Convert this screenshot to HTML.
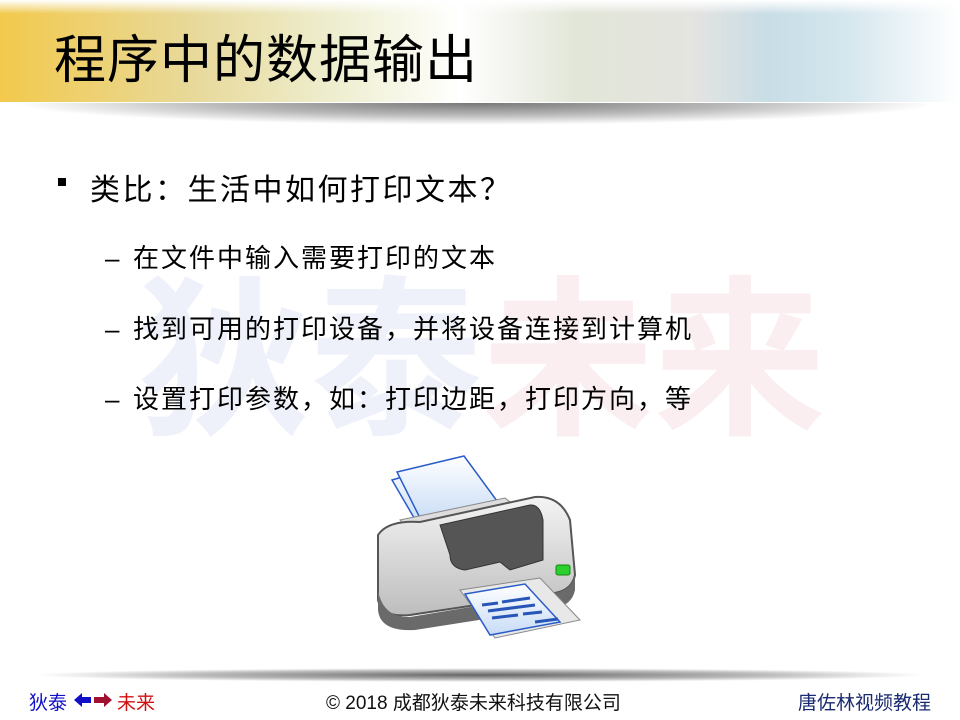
<!DOCTYPE html>
<html><head><meta charset="utf-8"><style>
body{margin:0;width:960px;height:720px;position:relative;overflow:hidden;background:#fff;font-family:"Liberation Sans","Noto Sans CJK SC",sans-serif}
.hdr{position:absolute;left:0;top:0;width:960px;height:102px;background:linear-gradient(90deg,#f2c94c 0%,#e8d99a 20%,#eeeed0 35%,#fff 48%,#e2e6d8 60%,#e4e4e0 72%,#c8dde6 80%,#d4e6ee 88%,#fff 100%)}
.hdr:after{content:"";position:absolute;left:0;right:0;top:0;height:14px;background:linear-gradient(#fff,rgba(255,255,255,0))}
.shadow{position:absolute;left:10px;top:103px;width:930px;height:22px;background:radial-gradient(ellipse at 50% 0%,#777 0%,#bbb 40%,rgba(255,255,255,0) 70%)}
.title{position:absolute;left:54px;top:18px;font-size:52px;color:#000;letter-spacing:1px}
.wm{position:absolute;top:262px;left:138px;font-size:172px;font-weight:bold;line-height:200px}
.b1{position:absolute;left:58px;top:165px;font-size:30px;letter-spacing:2.5px}
.b1 .sq{position:absolute;left:0;top:13px;width:8px;height:8px;background:#000}
.b1 span.t{margin-left:32px}
.sub{position:absolute;left:105px;font-size:26px;letter-spacing:2px}
.sub b{font-weight:normal;display:inline-block;width:28px;letter-spacing:0}
.fshadow{position:absolute;left:30px;top:668px;width:900px;height:14px;background:radial-gradient(ellipse at 50% 50%,#666 0%,#bbb 45%,rgba(255,255,255,0) 70%)}
.ft{position:absolute;top:688px;font-size:19px}
</style></head><body>
<div class="hdr"></div><div class="shadow"></div>
<div class="title">程序中的数据输出</div>
<div class="wm"><span style="color:#eef1fa">狄泰</span><span style="color:#faeef1">未来</span></div>
<div class="b1"><div class="sq"></div><span class="t">类比：生活中如何打印文本？</span></div>
<div class="sub" style="top:238px"><b>–</b>在文件中输入需要打印的文本</div>
<div class="sub" style="top:309px"><b>–</b>找到可用的打印设备，并将设备连接到计算机</div>
<div class="sub" style="top:379px"><b>–</b>设置打印参数，如：打印边距，打印方向，等</div>
<svg style="position:absolute;left:360px;top:450px" width="240" height="200" viewBox="0 0 240 200">
<defs><linearGradient id="bd" x1="0" y1="0" x2="0" y2="1"><stop offset="0" stop-color="#f4f4f4"/><stop offset="1" stop-color="#bdbdbd"/></linearGradient>
<linearGradient id="pp" x1="0" y1="0" x2="0" y2="1"><stop offset="0" stop-color="#fff"/><stop offset="1" stop-color="#c8dcf6"/></linearGradient></defs>
<path d="M32 30 L100 10 L138 58 L60 78 Z" fill="url(#pp)" stroke="#2a5cc8" stroke-width="1.5"/>
<path d="M37 22 L104 6 L140 55 L62 72 Z" fill="url(#pp)" stroke="#2a5cc8" stroke-width="1.5"/>
<path d="M40 70 L145 48 L158 58 L50 82 Z" fill="#ddd" stroke="#888"/>
<path d="M18 85 Q28 70 60 72 L175 47 Q200 45 210 70 L215 125 Q212 140 195 143 L50 165 Q22 168 18 150 Z" fill="url(#bd)" stroke="#555" stroke-width="2"/>
<path d="M80 75 L170 55 Q180 54 183 70 L183 110 L150 120 L140 112 L105 120 Q90 118 90 105 Z" fill="#555" stroke="#333"/>
<path d="M18 140 Q23 168 50 167 L195 143 Q212 140 215 125 L215 140 Q212 155 195 158 L55 180 Q20 182 18 160 Z" fill="#6a6a6a"/>
<rect x="196" y="115" width="14" height="10" rx="2" fill="#2cd02c" stroke="#118811"/>
<path d="M100 140 L180 128 L220 170 L135 188 Z" fill="#e8e8e8" stroke="#888"/>
<path d="M105 144 L165 134 L200 172 L130 185 Z" fill="url(#pp)" stroke="#2a5cc8" stroke-width="1.5"/>
<g stroke="#2756b8" stroke-width="3"><line x1="122" y1="155" x2="138" y2="153"/><line x1="142" y1="152" x2="170" y2="148"/><line x1="128" y1="161" x2="175" y2="155"/><line x1="132" y1="168" x2="158" y2="165"/><line x1="163" y1="164" x2="182" y2="162"/><line x1="175" y1="172" x2="198" y2="169"/></g>
</svg>
<div class="fshadow"></div>
<div class="ft" style="left:29px;color:#1010c8">狄泰</div>
<svg style="position:absolute;left:73px;top:692px" width="40" height="16" viewBox="0 0 40 16"><path d="M1 8 L9 1 L9 5 L18 5 L18 11 L9 11 L9 15 Z" fill="#1010c8"/><path d="M39 8 L31 1 L31 5 L21 5 L21 11 L31 11 L31 15 Z" fill="#a01030"/></svg>
<div class="ft" style="left:117px;color:#d01010">未来</div>
<div class="ft" style="left:326px;color:#111">© 2018 成都狄泰未来科技有限公司</div>
<div class="ft" style="left:798px;color:#1a2a70">唐佐林视频教程</div>
</body></html>
